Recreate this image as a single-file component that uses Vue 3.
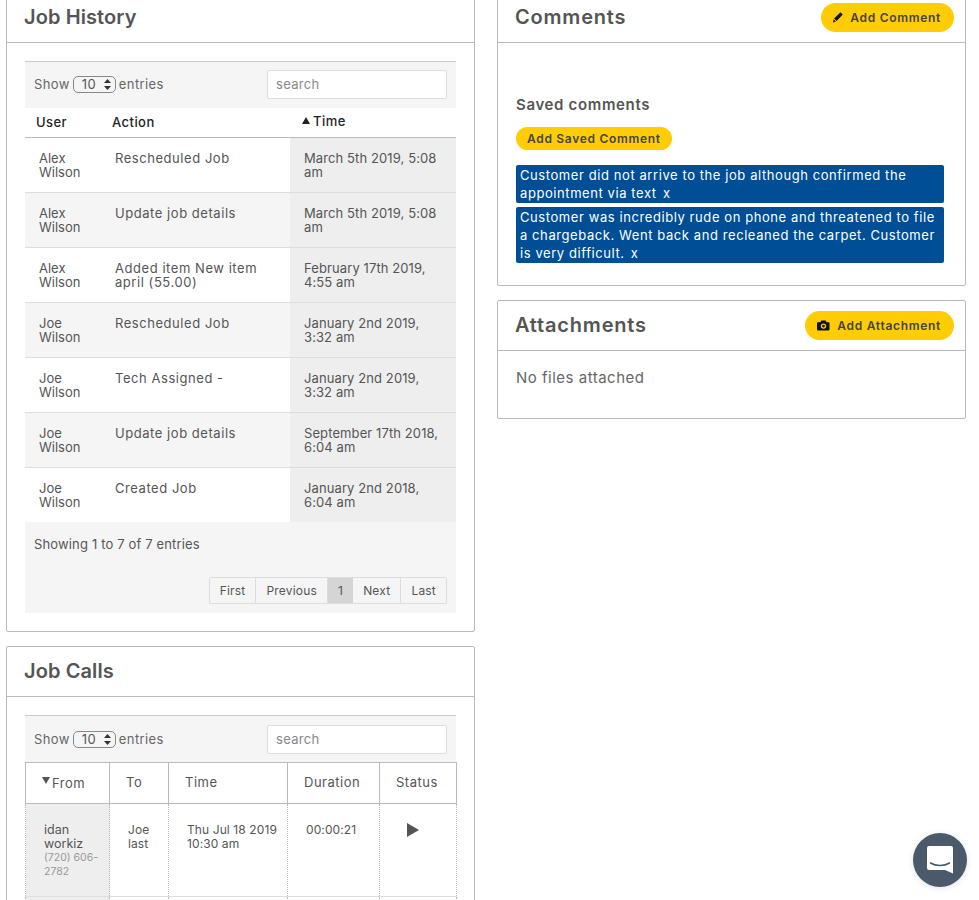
<script setup>
const history = [
  { user: 'Alex Wilson', action: 'Rescheduled Job', time: 'March 5th 2019, 5:08 am' },
  { user: 'Alex Wilson', action: 'Update job details', time: 'March 5th 2019, 5:08 am' },
  { user: 'Alex Wilson', action: 'Added item New item april (55.00)', time: 'February 17th 2019, 4:55 am' },
  { user: 'Joe Wilson', action: 'Rescheduled Job', time: 'January 2nd 2019, 3:32 am' },
  { user: 'Joe Wilson', action: 'Tech Assigned -', time: 'January 2nd 2019, 3:32 am' },
  { user: 'Joe Wilson', action: 'Update job details', time: 'September 17th 2018, 6:04 am' },
  { user: 'Joe Wilson', action: 'Created Job', time: 'January 2nd 2018, 6:04 am' }
]
const pages = ['First', 'Previous', '1', 'Next', 'Last']
const comments = [
  'Customer did not arrive to the job although confirmed the appointment via text',
  'Customer was incredibly rude on phone and threatened to file a chargeback. Went back and recleaned the carpet. Customer is very difficult.'
]
</script>

<template>
  <div class="page">
    <div class="col">
      <section class="card">
        <header class="head"><h2>Job History</h2></header>
        <div class="body">
          <div class="filters first">
            <div class="show">Show
              <span class="sel">10<svg width="7" height="11" viewBox="0 0 7 11"><path d="M3.5 0 7 4H0zM3.5 11 0 7h7z" fill="#333"/></svg></span>
              entries</div>
            <input class="search" placeholder="search" />
          </div>
          <table class="hist">
            <colgroup><col class="h1" /><col class="h2" /><col class="h3" /></colgroup>
            <thead>
              <tr>
                <th>User</th>
                <th>Action</th>
                <th class="sorted"><i class="up"></i>Time</th>
              </tr>
            </thead>
            <tbody>
              <tr v-for="(r, i) in history" :key="i" :class="{ odd: i % 2 === 1 }">
                <td class="us">{{ r.user }}</td>
                <td class="ac">{{ r.action }}</td>
                <td class="tm">{{ r.time }}</td>
              </tr>
            </tbody>
          </table>
          <div class="foot">
            <div class="info">Showing 1 to 7 of 7 entries</div>
            <div class="pager">
              <span v-for="p in pages" :key="p" class="pg" :class="{ on: p === '1' }">{{ p }}</span>
            </div>
          </div>
        </div>
      </section>

      <section class="card">
        <header class="head"><h2>Job Calls</h2></header>
        <div class="body">
          <div class="filters">
            <div class="show">Show
              <span class="sel">10<svg width="7" height="11" viewBox="0 0 7 11"><path d="M3.5 0 7 4H0zM3.5 11 0 7h7z" fill="#333"/></svg></span>
              entries</div>
            <input class="search" placeholder="search" />
          </div>
          <table class="calls">
            <colgroup><col class="c1" /><col class="c2" /><col class="c3" /><col class="c4" /><col class="c5" /></colgroup>
            <thead>
              <tr>
                <th class="from"><i class="down"></i>From</th>
                <th>To</th>
                <th>Time</th>
                <th>Duration</th>
                <th>Status</th>
              </tr>
            </thead>
            <tbody>
              <tr>
                <td class="caller">idan workiz<small>(720) 606-<wbr />2782</small></td>
                <td class="to">Joe last</td>
                <td class="when">Thu Jul 18 2019 10:30 am</td>
                <td class="dur">00:00:21</td>
                <td class="st"><svg width="12" height="14" viewBox="0 0 12 14"><path d="M0 0 12 7 0 14z" fill="#555"/></svg></td>
              </tr>
              <tr>
                <td class="caller"></td>
                <td></td>
                <td></td>
                <td></td>
                <td></td>
              </tr>
            </tbody>
          </table>
        </div>
      </section>
    </div>

    <div class="col wide">
      <section class="card">
        <header class="head">
          <h2>Comments</h2>
          <button class="btn">
            <svg width="10" height="11" viewBox="0 0 10 11"><path d="M7 .7c.3-.3.7-.3 1 0l1.300 1.300c.3.3.3.7 0 1L3.600 9 1.100 6.500z" fill="#111"/><path d="M.6 7.200 2.900 9.600 0 10.600z" fill="#111"/></svg>
            Add Comment
          </button>
        </header>
        <div class="cbody">
          <h3>Saved comments</h3>
          <button class="btn small">Add Saved Comment</button>
          <div class="notes">
            <div v-for="c in comments" :key="c" class="note">{{ c }} <span class="x">x</span></div>
          </div>
        </div>
      </section>

      <section class="card">
        <header class="head">
          <h2>Attachments</h2>
          <button class="btn">
            <svg width="13" height="11" viewBox="0 0 13 11"><path fill-rule="evenodd" d="M4.300.5h4.400l.9 1.700h2c.5 0 .9.400.9.900v6.500c0 .5-.4.900-.9.900H.9c-.5 0-.9-.4-.9-.9V3.100c0-.5.400-.9.900-.9h2.500zM6.500 3.400a2.700 2.700 0 1 0 0 5.400 2.700 2.700 0 0 0 0-5.400zm0 1.300a1.400 1.400 0 1 1 0 2.800 1.400 1.400 0 0 1 0-2.800z" fill="#111"/></svg>
            Add Attachment
          </button>
        </header>
        <div class="abody">No files attached</div>
      </section>
    </div>
  </div>

  <div class="chat">
    <svg width="26" height="28" viewBox="0 0 26 28">
      <path d="M2 0H24a2 2 0 0 1 2 2V27.500L18 24H2a2 2 0 0 1-2-2V2a2 2 0 0 1 2-2z" fill="#fff"/>
      <path d="M3.500 17c5 3.200 14 3.200 19 0" fill="none" stroke="#4a5a6b" stroke-width="1.500" stroke-linecap="round"/>
    </svg>
  </div>
</template>

<style>
html, body { overflow: hidden; height: 900px; background: #fff; }
</style>

<style scoped>
.page {
  display: flex;
  gap: 22px;
  margin-top: -8px;
  padding: 0 13px 0 6px;
  font-family: Inter, "Liberation Sans", sans-serif;
  color: #555;
  font-size: 13px;
  align-items: flex-start;
}
.col { width: 469px; display: flex; flex-direction: column; gap: 14px; }
.card { border: 1px solid #bbb; border-radius: 2px; background: #fff; }
.head {
  height: 49px;
  border-bottom: 1px solid #bbb;
  padding: 0 11px 0 17px;
  display: flex;
  align-items: center;
  justify-content: space-between;
}
h2 { margin: 0 0 2px; font-size: 20px; font-weight: 600; color: #555; letter-spacing: .1px; }
.wide h2 { letter-spacing: .8px; }
.btn {
  height: 29px;
  border: 0;
  border-radius: 15px;
  background: #ffcc05;
  padding: 0 13px 0 12px;
  font: 600 12px Inter, sans-serif;
  letter-spacing: .7px;
  color: #444;
  display: inline-flex;
  align-items: center;
  gap: 7px;
  white-space: nowrap;
}
.body { padding: 18px; }
.filters {
  height: 46px;
  background: #f5f5f5;
  border-top: 1px solid #ccc;
  display: flex;
  align-items: center;
  justify-content: space-between;
  padding: 0 9px;
}
.filters.first { padding-bottom: 2px; height: 44px; }
.show { display: flex; align-items: center; gap: 3px; letter-spacing: .4px; color: #666; }
.sel {
  width: 43px;
  height: 17px;
  box-sizing: border-box;
  border: 1px solid #888;
  border-radius: 5px;
  padding: 0 4px 0 8px;
  display: flex;
  align-items: center;
  justify-content: space-between;
  font-size: 13px;
  color: #555;
}
.search {
  width: 180px;
  height: 29px;
  box-sizing: border-box;
  border: 1px solid #ddd;
  border-radius: 2px;
  padding: 0 8px;
  font: 13px Inter, sans-serif;
  letter-spacing: .3px;
}
.search::placeholder { color: #888; }
table { border-collapse: collapse; table-layout: fixed; width: 431px; }
.h1 { width: 76px; } .h2 { width: 189px; } .h3 { width: 166px; }
.hist th {
  height: 29px;
  box-sizing: border-box;
  padding: 0 11px;
  text-align: left;
  font-weight: 500;
  font-size: 13px;
  letter-spacing: .45px;
  color: #222;
  border-bottom: 1px solid #bbb;
}
.hist th.sorted { padding: 0 0 2px 12px; }
.up, .down { display: inline-block; width: 0; height: 0; border-left: 4px solid transparent; border-right: 4px solid transparent; margin-right: 3px; }
.up { border-bottom: 7px solid #222; vertical-align: 2px; }
.down { border-top: 7px solid #555; vertical-align: 4px; margin-right: 2px; }
.hist td {
  height: 55px;
  box-sizing: border-box;
  vertical-align: top;
  padding: 13px 14px 0;
  line-height: 14px;
  border-bottom: 1px solid #ddd;
}
.hist tr:last-child td { border-bottom: 0; height: 55px; }
.hist td.ac { letter-spacing: .55px; padding-right: 8px; }
.hist td.tm { letter-spacing: .1px; padding-right: 12px; background: #eee; }
.odd td { background: #f5f5f5; }
.foot { background: #f5f5f5; height: 91px; padding: 0 9px; box-sizing: border-box; display: flex; flex-direction: column; }
.info { margin-top: 15px; line-height: 15px; letter-spacing: .15px; }
.pager {
  align-self: flex-end;
  margin-top: 25px;
  display: flex;
  border: 1px solid #ddd;
  border-radius: 2px;
}
.pg { height: 25px; line-height: 25px; padding: 0 10px; font-size: 12px; letter-spacing: .2px; border-right: 1px solid #ddd; }
.pg:last-child { border-right: 0; }
.pg.on { background: #d5d5d5; border-right: 0; }
.calls { border-top: 1px solid #bbb; }
.c1 { width: 84px; } .c2 { width: 59px; } .c3 { width: 119px; } .c4 { width: 92px; } .c5 { width: 77px; }
.calls th {
  height: 41px;
  box-sizing: border-box;
  font-weight: 400;
  font-size: 13px;
  letter-spacing: .5px;
  text-align: left;
  padding: 0 16px 2px;
  border: 1px solid #bbb;
  border-top: 0;
}
.calls th.from { padding: 0 0 0 16px; }
.calls td {
  height: 93px;
  box-sizing: border-box;
  vertical-align: top;
  padding: 19px 8px 0 18px;
  line-height: 14px;
  font-size: 12px;
  letter-spacing: .1px;
  border-left: 1px dotted #bbb;
  border-right: 1px dotted #bbb;
  border-bottom: 1px solid #ddd;
}
.calls td.caller { background: #eee; font-size: 12.500px; padding-right: 6px; letter-spacing: 0; }
.caller small { display: block; font-size: 10.500px; color: #999; }
.calls td.st { padding: 19px 0 0 27px; }
.cbody { padding: 52px 21px 22px 18px; }
h3 { margin: 0 0 12px; font-size: 15px; line-height: 20px; font-weight: 600; color: #555; letter-spacing: .65px; }
.btn.small { height: 23px; padding: 0 11px; letter-spacing: .7px; }
.notes { margin-top: 15px; display: flex; flex-direction: column; gap: 4px; }
.note { background: #004e95; color: #fff; border-radius: 2px; padding: 1px 4px; line-height: 18px; font-size: 13px; letter-spacing: .58px; }
.x { margin-left: 2px; }
.abody { height: 67px; padding: 19px 18px; box-sizing: border-box; font-size: 15px; letter-spacing: .5px; line-height: 16px; color: #666; }
.chat {
  position: fixed;
  left: 913px;
  top: 833px;
  width: 54px;
  height: 54px;
  border-radius: 50%;
  background: #4a5a6b;
  display: flex;
  align-items: center;
  justify-content: center;
  box-shadow: 0 1px 6px rgba(0,0,0,.12);
}
</style>
